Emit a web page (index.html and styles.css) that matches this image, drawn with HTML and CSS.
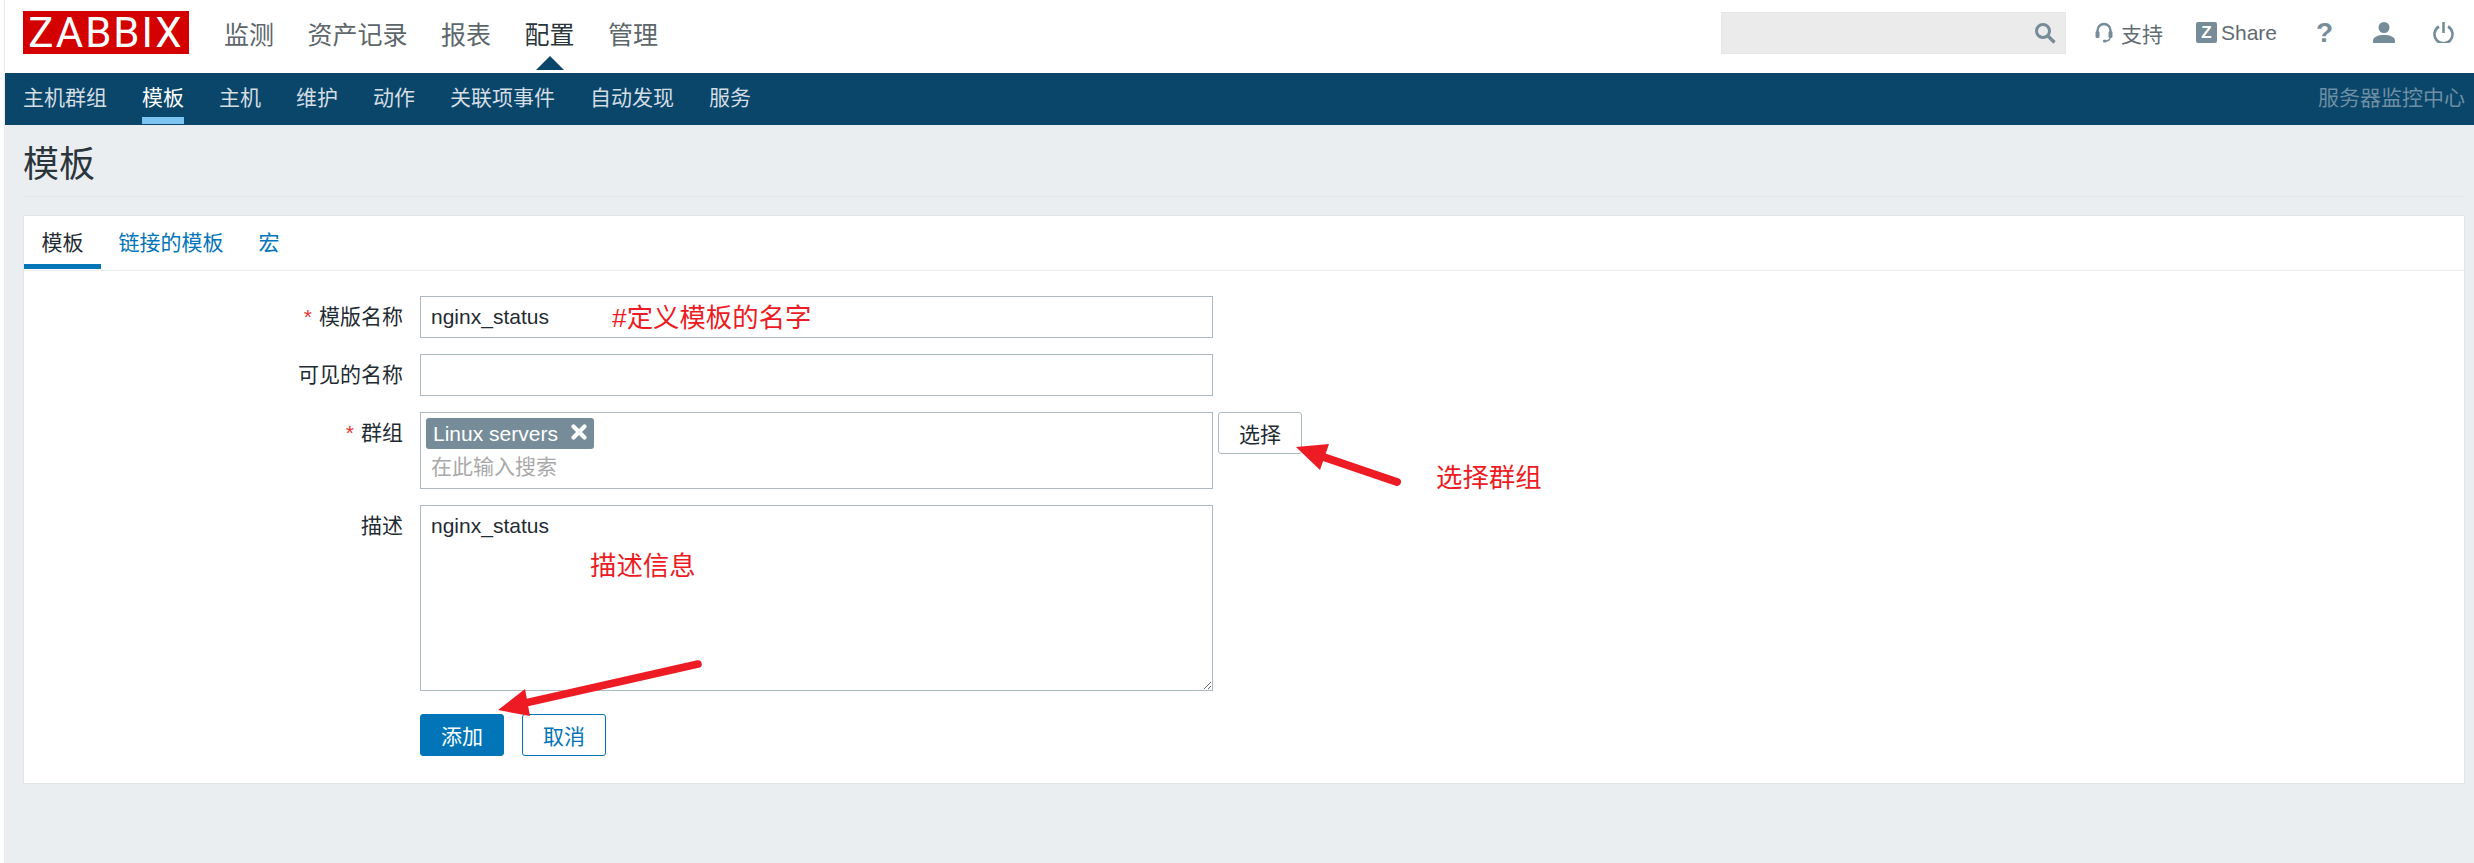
FILE: index.html
```html
<!DOCTYPE html>
<html lang="zh-CN">
<head>
<meta charset="utf-8">
<title>模板</title>
<link rel="stylesheet" href="styles.css">
</head>
<body>
<div class="page">
  <header class="topbar">
    <div class="logo">ZABBIX</div>
    <nav class="mainnav">
      <a>监测</a><a>资产记录</a><a>报表</a><a class="current">配置</a><a>管理</a>
    </nav>
    <div class="tools">
      <div class="search">
        <svg class="search-icon" viewBox="0 0 22 22" width="22" height="22"><circle cx="9" cy="9" r="6.5" fill="none" stroke="#768d99" stroke-width="3"/><path d="M13.5 13.5L20.5 20.5" stroke="#768d99" stroke-width="3.4"/></svg>
      </div>
      <a class="tool support">
        <svg viewBox="0 0 18 21" width="18" height="21"><path d="M2.5 13V8.500a6.500 6.500 0 0 1 13 0V13" fill="none" stroke="#768d99" stroke-width="2.400"/><rect x="0.500" y="9" width="4" height="7" rx="1.500" fill="#768d99"/><rect x="13.500" y="9" width="4" height="7" rx="1.500" fill="#768d99"/><path d="M15 15.500c0 2.800-2 3.500-5 3.500" fill="none" stroke="#768d99" stroke-width="1.500"/><rect x="8" y="17.800" width="3.500" height="2.600" rx="1" fill="#768d99"/></svg>
        <span>支持</span>
      </a>
      <a class="tool share"><span class="zbox">Z</span><span>Share</span></a>
      <a class="tool help">?</a>
      <svg class="tool user" viewBox="0 0 22 21" width="22" height="21"><circle cx="11" cy="5.500" r="5.500" fill="#768d99"/><path d="M0 21v-2.500C0 15 5 13 11 13s11 2 11 5.500V21z" fill="#768d99"/></svg>
      <svg class="tool power" viewBox="0 0 21 21" width="21" height="21"><path d="M6 4.500a9 9 0 1 0 9 0" fill="none" stroke="#768d99" stroke-width="2.600"/><path d="M10.500 0v11" stroke="#768d99" stroke-width="2.600"/></svg>
    </div>
  </header>

  <nav class="subnav">
    <a>主机群组</a><a class="active">模板</a><a>主机</a><a>维护</a><a>动作</a><a>关联项事件</a><a>自动发现</a><a>服务</a>
    <span class="server">服务器监控中心</span>
  </nav>

  <main class="content">
    <h1 class="title">模板</h1>
    <section class="card">
      <div class="tabs">
        <a class="tab selected">模板</a><a class="tab">链接的模板</a><a class="tab">宏</a>
      </div>
      <form class="form">
        <div class="row">
          <label class="label"><span class="star">*</span>模版名称</label>
          <input class="field" type="text" value="nginx_status">
        </div>
        <div class="row">
          <label class="label">可见的名称</label>
          <input class="field" type="text" value="">
        </div>
        <div class="row">
          <label class="label"><span class="star">*</span>群组</label>
          <div class="multi">
            <span class="chip">Linux servers
              <svg class="chip-x" viewBox="0 0 16 16" width="16" height="16"><path d="M2.500 2.500L13.500 13.500M13.500 2.500L2.500 13.500" stroke="#fff" stroke-width="4.200" stroke-linecap="round"/></svg>
            </span>
            <input class="multi-input" type="text" placeholder="在此输入搜索">
          </div>
          <button class="btn-select" type="button">选择</button>
        </div>
        <div class="row">
          <label class="label">描述</label>
          <textarea class="area">nginx_status</textarea>
        </div>
        <div class="row actions">
          <button class="btn primary" type="button">添加</button>
          <button class="btn ghost" type="button">取消</button>
        </div>
      </form>
    </section>
  </main>
</div>

<svg class="arrows" viewBox="0 0 2474 863" width="2474" height="863">
  <line x1="1397" y1="482" x2="1322" y2="456.500" stroke="#ed1c24" stroke-width="8" stroke-linecap="round"/>
  <polygon points="1296,447 1329,444 1320,470" fill="#ed1c24"/>
  <line x1="698" y1="664" x2="523" y2="703.500" stroke="#ed1c24" stroke-width="7.500" stroke-linecap="round"/>
  <polygon points="498,710 525,689 530,716" fill="#ed1c24"/>
</svg>
<div class="note note-name">#定义模板的名字</div>
<div class="note note-group">选择群组</div>
<div class="note note-desc">描述信息</div>
</body>
</html>
```

FILE: styles.css
```css
* { box-sizing: border-box; }

html, body {
  margin: 0;
  padding: 0;
  background: #fff;
}

body {
  position: relative;
  width: 2474px;
  height: 863px;
  overflow: hidden;
  font-family: "Liberation Sans", "Noto Sans CJK SC", sans-serif;
  font-size: 21px;
  color: #1f2c33;
}

.page {
  margin-left: 4px;
  height: 863px;
  border-left: 1px solid #e6e9eb;
  background: #ebeef0;
}

/* top bar */
.topbar {
  display: flex;
  align-items: center;
  height: 73px;
  padding: 0 20px 8px 18px;
  background: #fff;
}

.logo {
  width: 166px;
  height: 43px;
  background: #d40000;
  color: #fff;
  font-family: "Roboto", "Liberation Sans", sans-serif;
  font-weight: 400;
  font-size: 42px;
  line-height: 43px;
  letter-spacing: 2px;
  text-align: center;
}

.mainnav {
  display: flex;
  gap: 33.5px;
  margin-left: 35px;
  font-size: 25px;
  color: #5c666b;
}

.mainnav .current {
  position: relative;
  color: #2b363c;
}

.mainnav .current::after {
  content: "";
  position: absolute;
  left: 11px;
  top: 41px;
  border-left: 14px solid transparent;
  border-right: 14px solid transparent;
  border-bottom: 14px solid #0a466a;
}

.tools {
  display: flex;
  align-items: center;
  margin-left: auto;
  color: #5f6b72;
}

.search {
  display: flex;
  align-items: center;
  justify-content: flex-end;
  width: 345px;
  height: 42px;
  padding-right: 9px;
  background: #ebebeb;
  border: 1px solid #e4e6e7;
}

.tool {
  display: flex;
  align-items: center;
}

.support {
  gap: 8px;
  margin-left: 29px;
}

.share {
  gap: 4px;
  margin-left: 33px;
}

.zbox {
  width: 21px;
  height: 21px;
  border-radius: 2px;
  background: #768d99;
  color: #fff;
  font-weight: 700;
  font-size: 17px;
  line-height: 21px;
  text-align: center;
}

.help {
  margin-left: 42px;
  width: 11px;
  justify-content: center;
  color: #768d99;
  font-size: 28px;
  font-weight: 700;
  line-height: 21px;
}

.user { margin-left: 43px; }
.power { margin-left: 38px; }

/* sub navigation */
.subnav {
  display: flex;
  align-items: flex-start;
  gap: 35px;
  height: 52px;
  padding: 0 9px 0 18px;
  background: #0a466a;
  color: #d3dde3;
}

.subnav a {
  height: 51px;
  padding-top: 12px;
  line-height: 26px;
  border-bottom: 7px solid transparent;
}

.subnav .active {
  color: #fff;
  border-bottom-color: #7cc4f2;
}

.server {
  margin-left: auto;
  padding-top: 12px;
  line-height: 26px;
  color: #6d8ea3;
}

/* content */
.content {
  padding: 0 9px 0 18px;
}

.title {
  height: 72px;
  margin: 0 0 18px;
  padding-top: 18px;
  font-size: 36px;
  font-weight: 400;
  line-height: 44px;
  color: #2b363c;
  border-bottom: 1px solid #dfe4e7;
}

.card {
  height: 569px;
  background: #fff;
  border: 1px solid #dfe4e7;
}

.tabs {
  display: flex;
  height: 55px;
  border-bottom: 1px solid #ebeef0;
}

.tab {
  height: 53px;
  padding: 14px 17.5px 0;
  line-height: 26px;
  color: #0275b8;
}

.tab.selected {
  color: #1f2c33;
  border-bottom: 5px solid #0275b8;
}

.form {
  display: flex;
  flex-direction: column;
  gap: 16px;
  padding-top: 25px;
}

.row {
  display: flex;
  align-items: flex-start;
  gap: 17px;
}

.label {
  width: 379px;
  line-height: 42px;
  text-align: right;
}

.star {
  margin-right: 7px;
  color: #e33734;
}

.field {
  width: 793px;
  height: 42px;
  padding: 0 10px;
  border: 1px solid #acbbc2;
  border-radius: 0;
  outline: 0;
  background: #fff;
  font: inherit;
  color: inherit;
}

.multi {
  display: flex;
  flex-direction: column;
  align-items: flex-start;
  width: 793px;
  height: 77px;
  padding: 5px;
  border: 1px solid #acbbc2;
}

.chip {
  display: flex;
  align-items: center;
  justify-content: space-between;
  width: 168px;
  height: 31px;
  padding: 0 7px;
  border-radius: 3px;
  background: #768d99;
  color: #fff;
  line-height: 31px;
}

.chip-x {
  margin-top: -3px;
}

.multi-input {
  width: 700px;
  height: 30px;
  margin: 3px 0 0 5px;
  padding: 0;
  border: 0;
  outline: 0;
  background: transparent;
  font: inherit;
}

.multi-input::placeholder {
  color: #a9a9a9;
  opacity: 1;
}

.btn-select {
  width: 84px;
  height: 42px;
  margin-left: -12px;
  padding: 0;
  border: 1px solid #acbbc2;
  border-radius: 3px;
  background: #fff;
  font: inherit;
  color: inherit;
}

.area {
  display: block;
  width: 793px;
  height: 186px;
  padding: 5px 10px;
  border: 1px solid #acbbc2;
  border-radius: 0;
  outline: 0;
  font: inherit;
  line-height: 30px;
  color: inherit;
}

.actions {
  gap: 18px;
  margin-top: 7px;
  padding-left: 396px;
}

.btn {
  width: 84px;
  height: 42px;
  padding: 0;
  border: 1px solid #0275b8;
  border-radius: 3px;
  font: inherit;
}

.primary {
  background: #0275b8;
  color: #fff;
}

.ghost {
  background: #fff;
  color: #0275b8;
}

/* annotations drawn over the screenshot */
.arrows {
  position: absolute;
  left: 0;
  top: 0;
  pointer-events: none;
}

.note {
  position: absolute;
  font-size: 26.4px;
  line-height: 32px;
  color: #ed1c24;
  white-space: nowrap;
}

.note-name { left: 612px; top: 302px; }
.note-group { left: 1436px; top: 462px; }
.note-desc { left: 590px; top: 550px; }
```
